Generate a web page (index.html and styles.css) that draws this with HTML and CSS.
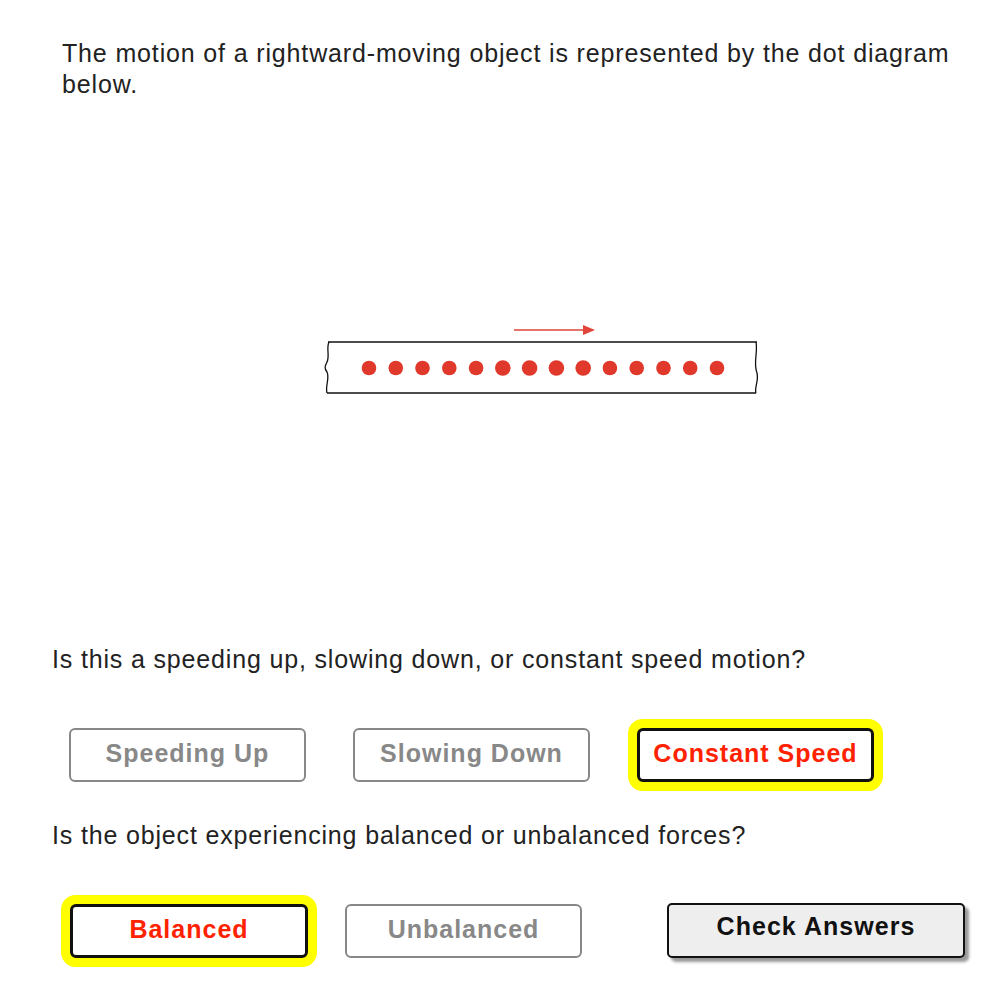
FILE: index.html
```html
<!DOCTYPE html>
<html>
<head>
<meta charset="utf-8">
<link rel="stylesheet" href="styles.css">
</head>
<body>
<div class="page">
  <p class="intro">The motion of a rightward-moving object is represented by the dot diagram below.</p>
  <div class="diagram">
    <svg width="445" height="80" viewBox="0 0 445 80">
      <path d="M8 24 H437" stroke="#111" stroke-width="1.3" fill="none"/>
      <path d="M7 75 H436" stroke="#111" stroke-width="1.3" fill="none"/>
      <path d="M9 24 C6 30 10 38 7 44 C5 48 4 50 7 54 C10 60 5 68 7 75" stroke="#111" stroke-width="1.3" fill="none"/>
      <path d="M436 24 C438 35 433 45 437 55 C439 63 434 70 436 75" stroke="#111" stroke-width="1.3" fill="none"/>
      <path d="M194 12 H264" stroke="#e0443a" stroke-width="1.6" fill="none"/>
      <path d="M263 7 L275 12 L263 17 Z" fill="#e0443a"/>
      <g fill="#e0392b">
        <circle cx="49" cy="50" r="7.3"/>
        <circle cx="75.8" cy="50" r="7.3"/>
        <circle cx="102.5" cy="50" r="7.3"/>
        <circle cx="129.3" cy="50" r="7.3"/>
        <circle cx="156.1" cy="50" r="7.3"/>
        <circle cx="182.8" cy="50" r="7.8"/>
        <circle cx="209.6" cy="50" r="7.8"/>
        <circle cx="236.4" cy="50" r="7.8"/>
        <circle cx="263.2" cy="50" r="7.8"/>
        <circle cx="289.9" cy="50" r="7.3"/>
        <circle cx="316.7" cy="50" r="7.3"/>
        <circle cx="343.5" cy="50" r="7.3"/>
        <circle cx="370.2" cy="50" r="7.3"/>
        <circle cx="397" cy="50" r="7.3"/>
      </g>
    </svg>
  </div>
  <p class="question q1">Is this a speeding up, slowing down, or constant speed motion?</p>
  <div class="row row1">
    <button class="choice">Speeding Up</button>
    <button class="choice">Slowing Down</button>
    <button class="choice selected">Constant Speed</button>
  </div>
  <p class="question q2">Is the object experiencing balanced or unbalanced forces?</p>
  <div class="row row2">
    <button class="choice selected wide">Balanced</button>
    <button class="choice">Unbalanced</button>
    <button class="check">Check Answers</button>
  </div>
</div>
</body>
</html>
```
FILE: styles.css
```css
html, body {
  margin: 0;
  padding: 0;
  background: #fff;
}
.page {
  font-family: "Liberation Sans", Arial, sans-serif;
  color: #222;
  padding-bottom: 40px;
}
.intro {
  margin: 38px 0 0 62px;
  width: 900px;
  font-size: 25px;
  line-height: 31px;
  letter-spacing: 0.85px;
}
.diagram {
  margin: 218px 0 0 320px;
  height: 80px;
}
.diagram svg {
  display: block;
}
.question {
  margin: 0 0 0 52px;
  font-size: 25px;
  line-height: 31px;
  letter-spacing: 0.84px;
}
.q1 { margin-top: 246px; }
.q2 { margin-top: 38px; }
.row {
  display: flex;
  align-items: center;
}
.row1 {
  margin: 53px 0 0 69px;
  gap: 47px;
}
.row2 {
  margin: 52px 0 0 70px;
  gap: 37px;
}
.choice {
  box-sizing: border-box;
  width: 237px;
  height: 54px;
  border: 2px solid #888;
  border-radius: 6px;
  background: #fff;
  color: #888;
  font-family: "Liberation Sans", Arial, sans-serif;
  font-weight: bold;
  font-size: 25px;
  letter-spacing: 1px;
  padding: 0 0 3px 0;
}
.choice.selected {
  border: 3px solid #111;
  color: #ff2200;
  box-shadow: 0 0 0 9px #ffff00;
}
.choice.wide { width: 238px; }
.check {
  box-sizing: border-box;
  width: 298px;
  height: 55px;
  margin-left: 48px;
  border: 2px solid #111;
  border-radius: 5px;
  background: #eeeeee;
  color: #111;
  font-family: "Liberation Sans", Arial, sans-serif;
  font-weight: bold;
  font-size: 25px;
  letter-spacing: 1.05px;
  padding: 0 0 8px 0;
  box-shadow: 4px 4px 3px #999;
}
```
